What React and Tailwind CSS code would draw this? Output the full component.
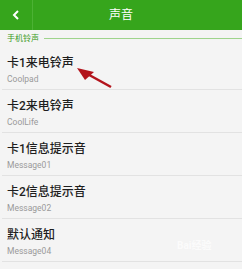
import React from "react";

const rows = [
  { title: "卡1来电铃声", sub: "Coolpad" },
  { title: "卡2来电铃声", sub: "CoolLife" },
  { title: "卡1信息提示音", sub: "Message01" },
  { title: "卡2信息提示音", sub: "Message02" },
  { title: "默认通知", sub: "Message04" },
];

export default function App() {
  return (
    <div
      className="relative w-[242px] h-[269px] overflow-hidden bg-[#f4f4f4]"
      style={{ fontFamily: '"Roboto", "Noto Sans CJK SC", sans-serif' }}
    >
      {/* Title bar */}
      <div className="flex h-[30px] items-center bg-[#36a51c]">
        <div className="flex h-full w-[33px] items-center justify-center border-r border-[#4cb234]">
          <svg width="8" height="10" viewBox="0 0 8 10">
            <path d="M6 1 L2 5 L6 9" fill="none" stroke="#fff" strokeWidth="2" />
          </svg>
        </div>
        <div className="flex-1 pr-[33px] text-center text-[12px] text-white">声音</div>
      </div>

      {/* Section header */}
      <div className="flex h-[17px] items-center gap-[5px] pl-[7px]">
        <span className="text-[8px] leading-none text-[#3a9a22]">手机铃声</span>
        <div className="h-px flex-1 bg-[#9ed48c]" />
      </div>

      {/* List */}
      <ul>
        {rows.map((row) => (
          <li
            key={row.title}
            className="ml-[2px] flex h-[43px] flex-col border-b border-[#e2e2e2] pl-[5px] pt-[8px]"
          >
            <span className="text-[12px] font-medium leading-[16px] text-[#1e1e1e]">{row.title}</span>
            <span className="mt-[3px] text-[8.5px] leading-[11px] text-[#9a9a9a]">{row.sub}</span>
          </li>
        ))}
      </ul>

      {/* Watermark */}
      <div className="absolute left-[177px] top-[238px] text-[10px] font-bold text-white opacity-70">
        Bai经验
      </div>

      {/* Red pointer arrow */}
      <svg className="absolute left-0 top-0" width="242" height="269">
        <line x1="111" y1="87" x2="82" y2="71" stroke="#b3141c" strokeWidth="2.5" />
        <path d="M77 68 L94 72 L85 80 Z" fill="#b3141c" />
      </svg>
    </div>
  );
}
